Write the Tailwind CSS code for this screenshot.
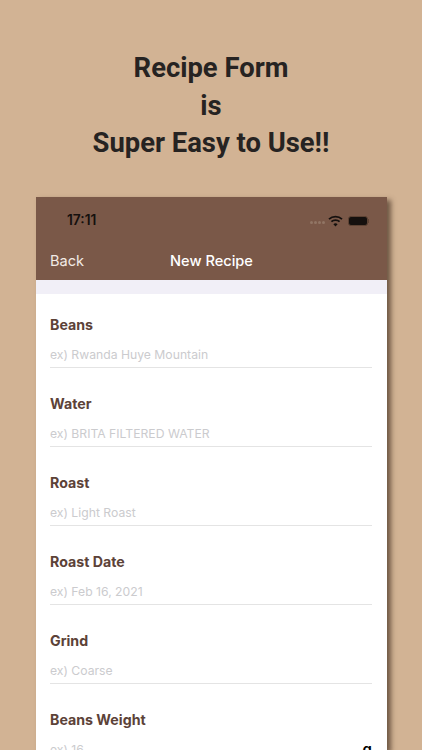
<!DOCTYPE html>
<html lang="en">
  <head>
    <meta charset="UTF-8" />
    <meta name="viewport" content="width=device-width, initial-scale=1.0" />
    <title>Recipe Form</title>
    <script src="https://cdn.jsdelivr.net/npm/@tailwindcss/browser@4"></script>
  </head>
  <body class="bg-[#d2b394] h-[750px] overflow-hidden font-['Inter','Liberation_Sans',sans-serif]">
    <!-- Heading -->
    <h1 class="pt-[50px] h-[197px] text-center text-[#262322] text-[27.4px] leading-[37.5px] font-bold font-['Roboto',sans-serif]">
      Recipe Form<br />is<br />Super Easy to Use!!
    </h1>

    <!-- Phone screen -->
    <div class="mx-[36px] w-[351px] h-[553px] bg-white shadow-[4px_3px_5px_rgba(70,50,35,0.7)] overflow-hidden">
      <!-- Status and nav bar -->
      <header class="bg-[#7a5848] h-[83px]">
        <div class="flex items-center justify-between h-[47px] pl-[31px] pr-[18px]">
          <span class="text-[13.8px] font-semibold text-[#15100e]">17:11</span>
          <div class="flex items-center gap-[3px]">
            <div class="flex gap-[1px] mt-[3px]">
              <span class="w-[3px] h-[3px] rounded-full bg-[#917565]"></span>
              <span class="w-[3px] h-[3px] rounded-full bg-[#917565]"></span>
              <span class="w-[3px] h-[3px] rounded-full bg-[#917565]"></span>
              <span class="w-[3px] h-[3px] rounded-full bg-[#917565]"></span>
            </div>
            <svg class="w-[15px] h-[12px]" viewBox="0 0 15 12" fill="none" stroke="#15100e" stroke-width="1.8">
              <path d="M1 4.2a9.4 9.4 0 0 1 13 0" />
              <path d="M3.4 6.7a6 6 0 0 1 8.2 0" />
              <path d="M7.5 11.6 5.4 9.2a3.2 3.2 0 0 1 4.2 0z" fill="#15100e" stroke="none" />
            </svg>
            <div class="flex items-center ml-[2px]">
              <div class="w-[20px] h-[10px] rounded-[3px] bg-[#15100e] border border-[#5e4334]"></div>
              <div class="w-[1px] h-[4px] bg-[#5e4334]"></div>
            </div>
          </div>
        </div>
        <div class="relative flex items-center justify-center h-[35px]">
          <span class="absolute left-[14px] text-[14.6px] text-[#f2eae5]">Back</span>
          <span class="text-[14.6px] font-medium text-white">New Recipe</span>
        </div>
      </header>

      <div class="h-[14px] bg-[#f1eff7]"></div>

      <!-- Form rows -->
      <form class="pl-[14px] pr-[15px] text-[#5c4238]">
        <div class="h-[79px] pt-[22px]">
          <label class="block text-[14.2px] leading-[18px] font-bold">Beans</label>
          <div class="mt-[12px] pb-[3px] text-[12.2px] leading-[18px] text-[#cbcbce] border-b border-[#e4e4e4]">ex) Rwanda Huye Mountain</div>
        </div>
        <div class="h-[79px] pt-[22px]">
          <label class="block text-[14.2px] leading-[18px] font-bold">Water</label>
          <div class="mt-[12px] pb-[3px] text-[12.2px] leading-[18px] text-[#cbcbce] border-b border-[#e4e4e4]">ex) BRITA FILTERED WATER</div>
        </div>
        <div class="h-[79px] pt-[22px]">
          <label class="block text-[14.2px] leading-[18px] font-bold">Roast</label>
          <div class="mt-[12px] pb-[3px] text-[12.2px] leading-[18px] text-[#cbcbce] border-b border-[#e4e4e4]">ex) Light Roast</div>
        </div>
        <div class="h-[79px] pt-[22px]">
          <label class="block text-[14.2px] leading-[18px] font-bold">Roast Date</label>
          <div class="mt-[12px] pb-[3px] text-[12.2px] leading-[18px] text-[#cbcbce] border-b border-[#e4e4e4]">ex) Feb 16, 2021</div>
        </div>
        <div class="h-[79px] pt-[22px]">
          <label class="block text-[14.2px] leading-[18px] font-bold">Grind</label>
          <div class="mt-[12px] pb-[3px] text-[12.2px] leading-[18px] text-[#cbcbce] border-b border-[#e4e4e4]">ex) Coarse</div>
        </div>
        <div class="h-[79px] pt-[22px]">
          <label class="block text-[14.2px] leading-[18px] font-bold">Beans Weight</label>
          <div class="mt-[12px] pb-[3px] text-[12.2px] leading-[18px] text-[#cbcbce] flex justify-between">
            <span>ex) 16</span><span class="font-semibold text-[15px] text-black">g</span>
          </div>
        </div>
      </form>
    </div>
  </body>
</html>
